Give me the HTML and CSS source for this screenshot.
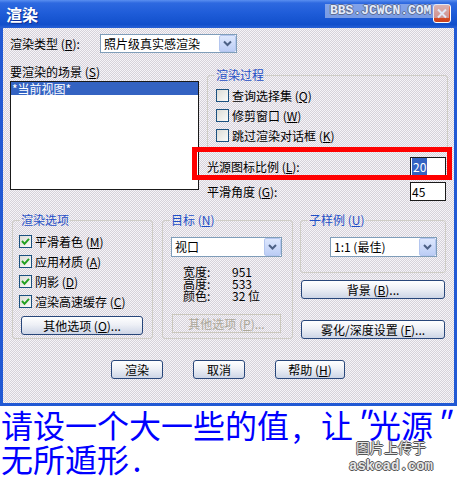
FILE: index.html
```html
<!DOCTYPE html>
<html lang="zh-CN">
<head>
    <meta charset="UTF-8">
    <title>渲染</title>
    <link rel="stylesheet" href="styles.css">
</head>
<body>
<div class="page">

    <div class="win">
        <div class="titlebar">
            <span class="title">渲染</span>
            <span class="close">
                <svg width="18" height="19" viewBox="0 0 18 19"><path d="M5 5.5 L13 13.5 M13 5.5 L5 13.5" stroke="#fff" stroke-width="2"/></svg>
            </span>
            <span class="wm">BBS.JCWCN.COM</span>
        </div>

        <div class="client">
            <!-- 渲染类型 -->
            <div class="typerow">
                <span class="lbl">渲染类型 (<u>R</u>):</span>
                <div class="sel sel-type">
                    <span class="val">照片级真实感渲染</span>
                    <span class="arr"><svg width="15" height="15" viewBox="0 0 15 15"><path d="M4 5.5 L7.5 9 L11 5.5" fill="none" stroke="#4d6185" stroke-width="2"/></svg></span>
                </div>
            </div>

            <div class="mid">
                <div class="scene">
                    <div class="scene-lbl">要渲染的场景 (<u>S</u>)</div>
                    <div class="listbox">
                        <div class="item on">*当前视图*</div>
                    </div>
                </div>

                <div class="right">
                    <fieldset class="grp proc">
                        <legend>渲染过程</legend>
                        <div class="in">
                            <div class="cbrow"><span class="chk"></span>查询选择集 (<u>Q</u>)</div>
                            <div class="cbrow"><span class="chk"></span>修剪窗口 (<u>W</u>)</div>
                            <div class="cbrow"><span class="chk"></span>跳过渲染对话框 (<u>K</u>)</div>
                        </div>
                    </fieldset>
                    <div class="field first">
                        <span>光源图标比例 (<u>L</u>):</span>
                        <span class="edit"><span class="hl">20</span></span>
                    </div>
                    <div class="field">
                        <span>平滑角度 (<u>G</u>):</span>
                        <span class="edit">45</span>
                    </div>
                </div>
            </div>

            <div class="lower">
                <fieldset class="grp g1">
                    <legend>渲染选项</legend>
                    <div class="in">
                        <div class="cbrow"><span class="chk"><svg width="11" height="11" viewBox="0 0 11 11"><path d="M2 5 L4.5 7.8 L9 2.8" fill="none" stroke="#21a121" stroke-width="2"/></svg></span>平滑着色 (<u>M</u>)</div>
                        <div class="cbrow"><span class="chk"><svg width="11" height="11" viewBox="0 0 11 11"><path d="M2 5 L4.5 7.8 L9 2.8" fill="none" stroke="#21a121" stroke-width="2"/></svg></span>应用材质 (<u>A</u>)</div>
                        <div class="cbrow"><span class="chk"><svg width="11" height="11" viewBox="0 0 11 11"><path d="M2 5 L4.5 7.8 L9 2.8" fill="none" stroke="#21a121" stroke-width="2"/></svg></span>阴影 (<u>D</u>)</div>
                        <div class="cbrow"><span class="chk"><svg width="11" height="11" viewBox="0 0 11 11"><path d="M2 5 L4.5 7.8 L9 2.8" fill="none" stroke="#21a121" stroke-width="2"/></svg></span>渲染高速缓存 (<u>C</u>)</div>
                        <div class="btn btn-opt">其他选项 (<u>O</u>)...</div>
                    </div>
                </fieldset>

                <fieldset class="grp g2">
                    <legend>目标 (<u>N</u>)</legend>
                    <div class="in">
                        <div class="sel tall sel-view">
                            <span class="val">视口</span>
                            <span class="arr"><svg width="15" height="16" viewBox="0 0 15 16"><path d="M4 6 L7.5 9.5 L11 6" fill="none" stroke="#4d6185" stroke-width="2"/></svg></span>
                        </div>
                        <div class="info">
                            <span>宽度:</span><span>951</span>
                            <span>高度:</span><span>533</span>
                            <span>颜色:</span><span>32 位</span>
                        </div>
                        <div class="btn off btn-opt2">其他选项 (<u>P</u>)...</div>
                    </div>
                </fieldset>

                <div class="col3">
                    <fieldset class="grp g3">
                        <legend>子样例 (<u>U</u>)</legend>
                        <div class="in">
                            <div class="sel tall sel-sub">
                                <span class="val">1:1 (最佳)</span>
                                <span class="arr"><svg width="15" height="16" viewBox="0 0 15 16"><path d="M4 6 L7.5 9.5 L11 6" fill="none" stroke="#4d6185" stroke-width="2"/></svg></span>
                            </div>
                        </div>
                    </fieldset>
                    <div class="btn btn-bg">背景 (<u>B</u>)...</div>
                    <div class="btn btn-fog">雾化/深度设置 (<u>F</u>)...</div>
                </div>
            </div>

            <div class="actions">
                <div class="btn w52">渲染</div>
                <div class="btn w52">取消</div>
                <div class="btn w70">帮助 (<u>H</u>)</div>
            </div>
        </div>
    </div>

    <div class="note">
        请设一个大一些的值<span class="hw">,</span><span class="hw">&nbsp;</span>让<span class="hw q">"</span>光源<span class="hw q">"</span><br>
        无所遁形<span class="hw">.</span>
    </div>

    <!-- 水印 -->
    <div class="stamp">
        <div class="cn">图片上传于</div>
        <div class="en">askcad.com</div>
    </div>

    <!-- 红框 标注 -->
    <div class="redbox"></div>
</div>
</body>
</html>
```

FILE: styles.css
```css
* {
    box-sizing: border-box;
}

body {
    margin: 0;
    background: #fff;
    font-family: "Noto Sans CJK SC", "Noto Sans", sans-serif;
    font-size: 12px;
    color: #000;
}

u {
    text-decoration: underline;
    text-underline-offset: 1px;
}

.page {
    position: relative;
    width: 457px;
    height: 480px;
    overflow: hidden;
}

/* 窗口 */
.win {
    width: 457px;
}

.titlebar {
    position: relative;
    display: flex;
    align-items: center;
    height: 28px;
    padding-left: 6px;
    background: linear-gradient(180deg, #5a8ff0 0, #2e69e0 3px, #1f5dd9 45%, #114fcb 88%, #2a62d6 100%);
}

.title {
    color: #fff;
    font-size: 16px;
    font-weight: bold;
    line-height: 16px;
    text-shadow: 1px 1px 0 #0c2f96;
}

.close {
    display: block;
    align-self: flex-start;
    width: 18px;
    height: 19px;
    margin: 4px 6px 0 auto;
    border: 1px solid #fff;
    border-radius: 3px;
    background: linear-gradient(180deg, #f08a66, #e0532c 55%, #c9401c);
}

.close svg {
    display: block;
    margin: -1px;
}

/* 水印 */
.wm {
    position: absolute;
    left: 325px;
    top: 4px;
    width: 124px;
    height: 14px;
    padding-left: 5px;
    background: rgba(200, 212, 240, 0.55);
    font-family: "Liberation Mono", monospace;
    font-weight: bold;
    font-size: 13px;
    line-height: 14px;
    color: #e4ecfb;
    text-shadow: -1px 0 #5d6d92, 1px 0 #5d6d92, 0 -1px #5d6d92, 0 1px #5d6d92;
}

.client {
    height: 378px;
    padding: 6px 0 0 7px;
    border: 3px solid #2159d4;
    border-top: 0;
    background-color: #e6e4e8;
    background-image: repeating-conic-gradient(#f6f4f8 0 25%, #d6d2da 0 50%);
    background-size: 2px 2px;
}

/* 下拉框 */
.sel {
    display: flex;
    height: 19px;
    border: 1px solid #7f9db9;
    background: #fff;
}

.sel .val {
    flex: 1;
    padding-left: 3px;
    line-height: 17px;
    white-space: nowrap;
}

.sel .arr {
    display: flex;
    align-items: center;
    justify-content: center;
    width: 17px;
    border: 1px solid #b4c6ef;
    border-radius: 2px;
    background: linear-gradient(180deg, #dde7fd, #bccdf5);
}

.sel.tall {
    height: 20px;
}

.sel.tall .val {
    line-height: 18px;
}

.typerow {
    display: flex;
    align-items: center;
    height: 19px;
}

.typerow .lbl {
    width: 90px;
}

.sel-type {
    width: 137px;
}

/* 中间 */
.mid {
    display: flex;
    height: 138px;
    margin-top: 10px;
}

.scene {
    width: 189px;
}

.scene-lbl {
    line-height: 18px;
}

.listbox {
    height: 109px;
    border: 1px solid #1a1a1a;
    background: #fff;
}

.item {
    padding-left: 1px;
    line-height: 13px;
    height: 13px;
}

.item.on {
    background: #3463c2;
    color: #fff;
}

.right {
    width: 242px;
    margin-left: 7px;
}

/* 分组框 */
.grp {
    margin: 0;
    padding: 0;
    min-width: 0;
    border: 1px solid #cfcdc6;
    border-radius: 3px;
}

.grp legend {
    margin-left: 7px;
    padding: 0 1px;
    font-size: 12px;
    line-height: 12px;
    color: #1f4fc6;
}

.proc {
    width: 241px;
    height: 80px;
    margin: 6px 0 0 1px;
}

.proc .in {
    padding: 5px 0 0 8px;
}

.cbrow {
    display: flex;
    height: 20px;
    line-height: 20px;
    white-space: nowrap;
}

.chk {
    display: flex;
    align-items: center;
    justify-content: center;
    flex: none;
    width: 13px;
    height: 13px;
    margin: 3px 3px 0 0;
    border: 1px solid #1c5180;
    background: linear-gradient(135deg, #dcdcd7, #fbfbf9);
}

.field {
    display: flex;
    align-items: center;
    justify-content: space-between;
    height: 19px;
    margin: 6px 2px 0 1px;
}

.field.first {
    margin-top: 8px;
}

.edit {
    width: 36px;
    height: 19px;
    padding-left: 1px;
    border: 1px solid #1a1a1a;
    background: #fff;
    line-height: 17px;
}

.hl {
    background: #3463c2;
    color: #fff;
    padding: 0 1px;
}

/* 下部 */
.lower {
    display: flex;
    align-items: flex-start;
    margin-top: 13px;
}

.g1 {
    width: 141px;
    height: 125px;
    margin-left: 2px;
}

.g1 .in {
    padding: 6px 0 0 6px;
}

.g2 {
    width: 131px;
    height: 125px;
    margin-left: 9px;
}

.g2 .in {
    padding: 11px 0 0 8px;
}

.col3 {
    width: 146px;
    margin-left: 7px;
}

.g3 {
    width: 146px;
    height: 59px;
}

.g3 .in {
    padding: 11px 0 0 29px;
}

.sel-view {
    width: 111px;
}

.sel-sub {
    width: 107px;
}

.info {
    display: grid;
    grid-template-columns: 49px auto;
    margin: 9px 0 0 12px;
    line-height: 12px;
}

/* 按钮 */
.btn {
    display: flex;
    align-items: center;
    justify-content: center;
    height: 19px;
    border: 1px solid #28467a;
    border-radius: 3px;
    background: linear-gradient(180deg, #ffffff, #eef0f6 45%, #cdd5e6);
    line-height: 17px;
    white-space: nowrap;
}

.btn.off {
    border-color: #cbc8bd;
    border-radius: 0;
    background: transparent;
    color: #aca899;
}

.btn-opt {
    width: 122px;
    margin: 4px 0 0 2px;
}

.btn-opt2 {
    width: 109px;
    margin: 12px 0 0 1px;
}

.btn-bg {
    width: 144px;
    margin: 7px 0 0 1px;
}

.btn-fog {
    width: 144px;
    margin: 21px 0 0 1px;
}

.actions {
    display: flex;
    gap: 30px;
    margin: 21px 0 0 101px;
}

.w52 {
    width: 52px;
}

.w70 {
    width: 70px;
}

/* 说明文字 */
.note {
    padding: 1px 0 0 1px;
    color: #0000ff;
    font-size: 32px;
    line-height: 34px;
    white-space: nowrap;
}

.hw {
    display: inline-block;
    width: 16px;
    text-align: center;
}

.hw.q {
    font-style: italic;
}

.stamp {
    position: absolute;
    left: 349px;
    top: 438px;
    width: 84px;
    text-align: center;
    color: #e6e6e6;
    text-shadow: -1px 0 #555, 1px 0 #555, 0 -1px #555, 0 1px #555;
}

.stamp .cn {
    font-size: 14px;
    line-height: 18px;
}

.stamp .en {
    margin-top: 2px;
    font-family: "Liberation Mono", monospace;
    font-weight: bold;
    font-size: 14px;
    line-height: 16px;
}

.redbox {
    position: absolute;
    left: 192px;
    top: 147px;
    width: 260px;
    height: 33px;
    border: 5px solid #ff0000;
}
```
